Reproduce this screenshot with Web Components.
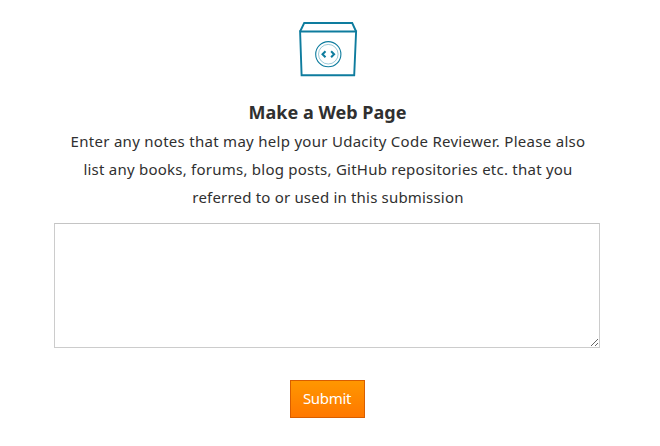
<!DOCTYPE html>
<html lang="en">
<head>
<meta charset="utf-8">
<title>Make a Web Page</title>
<style>
html,body{margin:0;background:#fff;height:446px;overflow:hidden}
body{font-family:"Noto Sans","Open Sans",sans-serif;color:#303030}
</style>
</head>
<body>
<submission-form>
  <box-icon slot="icon"></box-icon>
  <form-title slot="title">Make a Web Page</form-title>
  <note-line style="--track:.285px">Enter any notes that may help your Udacity Code Reviewer. Please also</note-line>
  <note-line style="--track:.235px">list any books, forums, blog posts, GitHub repositories etc. that you</note-line>
  <note-line style="--track:.19px">referred to or used in this submission</note-line>
  <notes-field slot="field"></notes-field>
  <submit-button slot="action">Submit</submit-button>
</submission-form>
<script>
function define(name, markup) {
  const t = document.createElement('template');
  t.innerHTML = markup;
  customElements.define(name, class extends HTMLElement {
    constructor() {
      super();
      this.attachShadow({mode: 'open'}).append(t.content.cloneNode(true));
    }
  });
}
define('submission-form', `<style>
:host{display:flex;flex-direction:column;align-items:center;width:546px;margin-left:54px;padding-top:21px}
.notes{display:flex;flex-direction:column;align-items:center;margin-bottom:12px;padding-left:2px}
</style><slot name="icon"></slot><slot name="title"></slot><div class="notes"><slot></slot></div><slot name="field"></slot><slot name="action"></slot>`);
define('box-icon', `<style>:host{display:block;width:60px;height:56px;margin-left:2px}svg{display:block}</style>
<svg width="60" height="56" viewBox="0 0 60 56" fill="none" stroke="#0e7c9e">
<path d="M2.1 10.5H58.1L56.2 54.2H3.6Z" stroke-width="1.9"/>
<path d="M2.1 10.5L6.2 2H54.2L58.1 10.5" stroke-width="1.9"/>
<circle cx="30.3" cy="33.2" r="12.6" stroke-width="1.1"/>
<circle cx="30.3" cy="33.2" r="9.8" stroke-width=".7" opacity=".6"/>
<path d="M27.5 30.2L24.5 33.2L27.5 36.2M33.1 30.2L36.1 33.2L33.1 36.2" stroke-width="2"/>
</svg>`);
define('form-title', `<style>:host{display:block;margin-top:20px;padding-left:1px;height:30px;line-height:30px;font-size:18px;font-weight:700;white-space:nowrap;letter-spacing:.02px}</style><slot></slot>`);
define('note-line', `<style>:host{display:block;height:28px;line-height:28px;font-size:15px;white-space:nowrap;letter-spacing:var(--track)}</style><slot></slot>`);
define('notes-field', `<style>:host{display:block;position:relative;width:546px;height:125px}
textarea{display:block;box-sizing:border-box;width:100%;height:100%;margin:0;border:1px solid #ccc;border-top-color:#c4c4c4;border-radius:0;background:#fff;resize:none;outline:0}
svg{position:absolute;right:2px;bottom:2px}</style><textarea aria-label="Notes"></textarea>
<svg width="7" height="7" viewBox="0 0 7 7" stroke="#555" stroke-width=".9"><path d="M0 7L7 0M4 7L7 4"/></svg>`);
define('submit-button', `<style>:host{display:block;margin-top:32px}
button{display:block;box-sizing:border-box;width:75px;height:38px;padding:0 0 2px;border:1px solid #d95e00;border-radius:0;background:linear-gradient(#ff9700,#ff7800);color:#fff;font:15px/34px "Noto Sans","Open Sans",sans-serif;letter-spacing:-.3px}</style><button><slot></slot></button>`);
</script>
</body>
</html>
